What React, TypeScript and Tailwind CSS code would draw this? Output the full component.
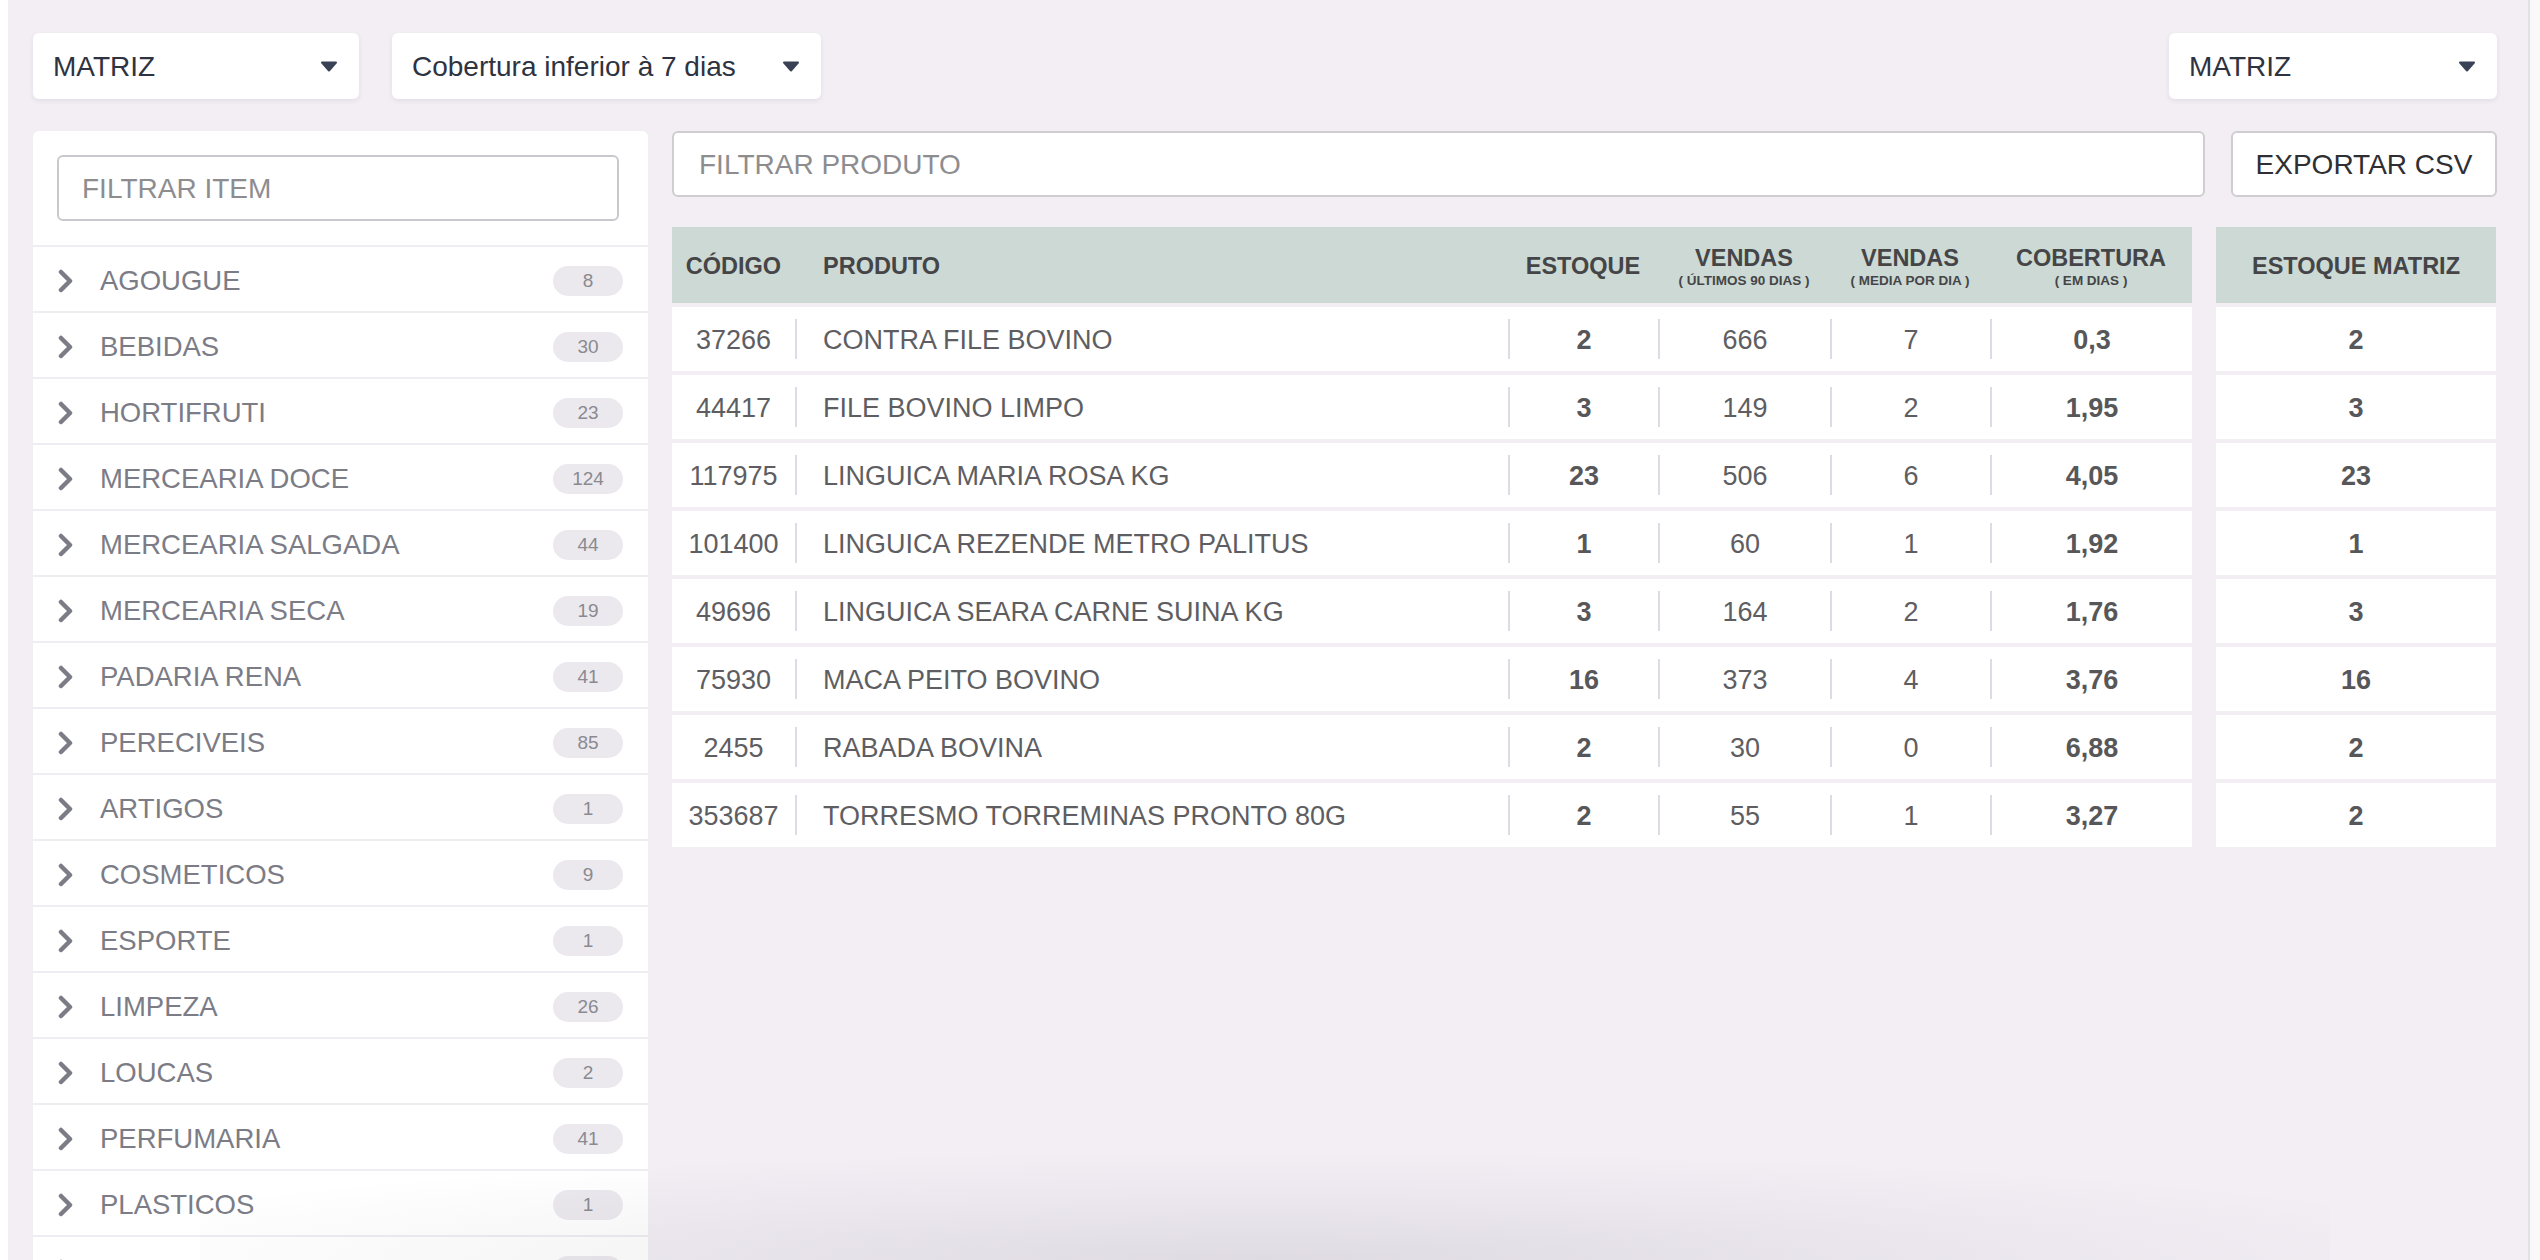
import React from "react";

const categories: [string, string][] = [
  ["AGOUGUE", "8"],
  ["BEBIDAS", "30"],
  ["HORTIFRUTI", "23"],
  ["MERCEARIA DOCE", "124"],
  ["MERCEARIA SALGADA", "44"],
  ["MERCEARIA SECA", "19"],
  ["PADARIA RENA", "41"],
  ["PERECIVEIS", "85"],
  ["ARTIGOS", "1"],
  ["COSMETICOS", "9"],
  ["ESPORTE", "1"],
  ["LIMPEZA", "26"],
  ["LOUCAS", "2"],
  ["PERFUMARIA", "41"],
  ["PLASTICOS", "1"],
  ["", ""],
];

const rows: string[][] = [
  ["37266", "CONTRA FILE BOVINO", "2", "666", "7", "0,3", "2"],
  ["44417", "FILE BOVINO LIMPO", "3", "149", "2", "1,95", "3"],
  ["117975", "LINGUICA MARIA ROSA KG", "23", "506", "6", "4,05", "23"],
  ["101400", "LINGUICA REZENDE METRO PALITUS", "1", "60", "1", "1,92", "1"],
  ["49696", "LINGUICA SEARA CARNE SUINA KG", "3", "164", "2", "1,76", "3"],
  ["75930", "MACA PEITO BOVINO", "16", "373", "4", "3,76", "16"],
  ["2455", "RABADA BOVINA", "2", "30", "0", "6,88", "2"],
  ["353687", "TORRESMO TORREMINAS PRONTO 80G", "2", "55", "1", "3,27", "2"],
];

function Caret() {
  return (
    <svg width="18" height="11" viewBox="0 0 18 11" className="shrink-0">
      <path d="M2 1.5 L16 1.5 L9 9.5 Z" fill="#3a4256" stroke="#3a4256" strokeWidth="2" strokeLinejoin="round" />
    </svg>
  );
}

function Chevron() {
  return (
    <svg width="18" height="24" viewBox="0 0 18 24" className="shrink-0">
      <polyline points="4,3 13,12 4,21" fill="none" stroke="#7b7c86" strokeWidth="4.5" strokeLinecap="round" strokeLinejoin="round" />
    </svg>
  );
}

function Dropdown({ label, width }: { label: string; width: string }) {
  return (
    <div
      className={`${width} h-[66px] bg-white rounded-[6px] shadow-[0_2px_5px_rgba(60,40,80,0.08)] flex items-center justify-between pl-[20px] pr-[21px]`}
    >
      <span className="text-[28px] text-[#2e3341] leading-none pt-[2px]">{label}</span>
      <Caret />
    </div>
  );
}

function Sep() {
  return <div className="w-[2px] h-[40px] bg-[#dcdce4] shrink-0" />;
}

export default function App() {
  return (
    <div className="w-[2540px] h-[1260px] overflow-hidden bg-[#f9f9f9] flex font-['Liberation_Sans',Arial,sans-serif] relative">
      <div className="w-[8px] bg-white shrink-0" />
      <div className="w-[2522px] h-full bg-[#f2eef4] border-r-2 border-[#e3e1e5] pl-[25px] pr-[31px] pt-[33px] flex flex-col shrink-0">
        {/* top bar */}
        <div className="flex items-center justify-between shrink-0">
          <div className="flex gap-[33px]">
            <Dropdown label="MATRIZ" width="w-[326px]" />
            <Dropdown label="Cobertura inferior à 7 dias" width="w-[429px]" />
          </div>
          <Dropdown label="MATRIZ" width="w-[328px]" />
        </div>

        {/* content */}
        <div className="flex gap-[24px] mt-[32px] flex-1 min-h-0">
          {/* left panel */}
          <div className="w-[615px] shrink-0 bg-white rounded-t-[6px] flex flex-col overflow-hidden">
            <div className="h-[116px] shrink-0 pl-[24px] pr-[29px] flex items-center border-b-2 border-[#eeedf1]">
              <div className="w-full h-[66px] border-2 border-[#c9c8cd] rounded-[6px] flex items-center pl-[23px]">
                <span className="text-[28px] text-[#8d8d90] leading-none pt-[2px]">FILTRAR ITEM</span>
              </div>
            </div>
            {categories.map(([name, count], i) => (
              <div
                key={i}
                className="h-[66px] shrink-0 border-b-2 border-[#eeedf1] flex items-center pl-[24px] pr-[25px]"
              >
                <div className="pt-[3px] flex">
                  <Chevron />
                </div>
                <span className="ml-[25px] text-[27.5px] text-[#7b7c86] leading-none flex-1 pt-[4px]">{name}</span>
                <span className="w-[70px] h-[30px] mt-[3px] rounded-full bg-[#ebe9ee] text-[#8a8a90] text-[19px] flex items-center justify-center leading-none">
                  {count}
                </span>
              </div>
            ))}
          </div>

          {/* right area */}
          <div className="flex-1 flex flex-col">
            <div className="flex gap-[26px] h-[66px]">
              <div className="flex-1 h-[66px] border-2 border-[#cfcdd2] rounded-[6px] bg-white flex items-center pl-[25px]">
                <span className="text-[28px] text-[#8d8d90] leading-none pt-[2px]">FILTRAR PRODUTO</span>
              </div>
              <div className="w-[266px] h-[66px] border-2 border-[#cfcdd2] rounded-[6px] bg-white flex items-center justify-center">
                <span className="text-[28px] text-[#2f2f33] leading-none pt-[2px]">EXPORTAR CSV</span>
              </div>
            </div>

            <div className="flex gap-[24px] mt-[30px]">
              {/* main table */}
              <div className="w-[1520px] flex flex-col">
                <div className="h-[76px] bg-[#ccd9d4] flex items-center text-[#454547] font-bold pt-[3px]">
                  <div className="w-[123px] text-center text-[23.5px]">CÓDIGO</div>
                  <div className="w-[713px] pl-[28px] text-[23.5px]">PRODUTO</div>
                  <div className="w-[150px] text-center text-[23.5px]">ESTOQUE</div>
                  <div className="w-[172px] flex flex-col items-center">
                    <span className="text-[23.5px] leading-[26px]">VENDAS</span>
                    <span className="text-[13.5px] leading-[16px] mt-[2px]">( ÚLTIMOS 90 DIAS )</span>
                  </div>
                  <div className="w-[160px] flex flex-col items-center">
                    <span className="text-[23.5px] leading-[26px]">VENDAS</span>
                    <span className="text-[13.5px] leading-[16px] mt-[2px]">( MEDIA POR DIA )</span>
                  </div>
                  <div className="w-[202px] flex flex-col items-center">
                    <span className="text-[23.5px] leading-[26px]">COBERTURA</span>
                    <span className="text-[13.5px] leading-[16px] mt-[2px]">( EM DIAS )</span>
                  </div>
                </div>
                {rows.map((r) => (
                  <div key={r[0]} className="h-[64px] mt-[4px] bg-white flex items-center text-[27px] text-[#5e5e62] leading-none">
                    <div className="w-[123px] text-center pt-[3px]">{r[0]}</div>
                    <div className="w-[713px] flex items-center">
                      <Sep />
                      <span className="pl-[26px] pt-[3px]">{r[1]}</span>
                    </div>
                    <div className="w-[150px] flex items-center">
                      <Sep />
                      <span className="flex-1 text-center font-bold text-[#575759] pt-[3px]">{r[2]}</span>
                    </div>
                    <div className="w-[172px] flex items-center">
                      <Sep />
                      <span className="flex-1 text-center pt-[3px]">{r[3]}</span>
                    </div>
                    <div className="w-[160px] flex items-center">
                      <Sep />
                      <span className="flex-1 text-center pt-[3px]">{r[4]}</span>
                    </div>
                    <div className="w-[202px] flex items-center">
                      <Sep />
                      <span className="flex-1 text-center font-bold text-[#575759] pt-[3px]">{r[5]}</span>
                    </div>
                  </div>
                ))}
              </div>

              {/* estoque matriz */}
              <div className="w-[280px] flex flex-col">
                <div className="h-[76px] bg-[#ccd9d4] flex items-center justify-center text-[23.5px] font-bold text-[#454547] pt-[3px]">
                  ESTOQUE MATRIZ
                </div>
                {rows.map((r) => (
                  <div
                    key={r[0]}
                    className="h-[64px] mt-[4px] bg-white flex items-center justify-center text-[27px] font-bold text-[#575759] leading-none pt-[3px]"
                  >
                    {r[6]}
                  </div>
                ))}
              </div>
            </div>
          </div>
        </div>
      </div>

      {/* soft bottom shadow overlay */}
      <div className="pointer-events-none absolute left-[200px] w-[2130px] bottom-0 h-[110px] bg-[radial-gradient(ellipse_60%_100%_at_50%_100%,rgba(40,30,50,0.09),rgba(40,30,50,0.03)_60%,transparent_100%)]" />
    </div>
  );
}
